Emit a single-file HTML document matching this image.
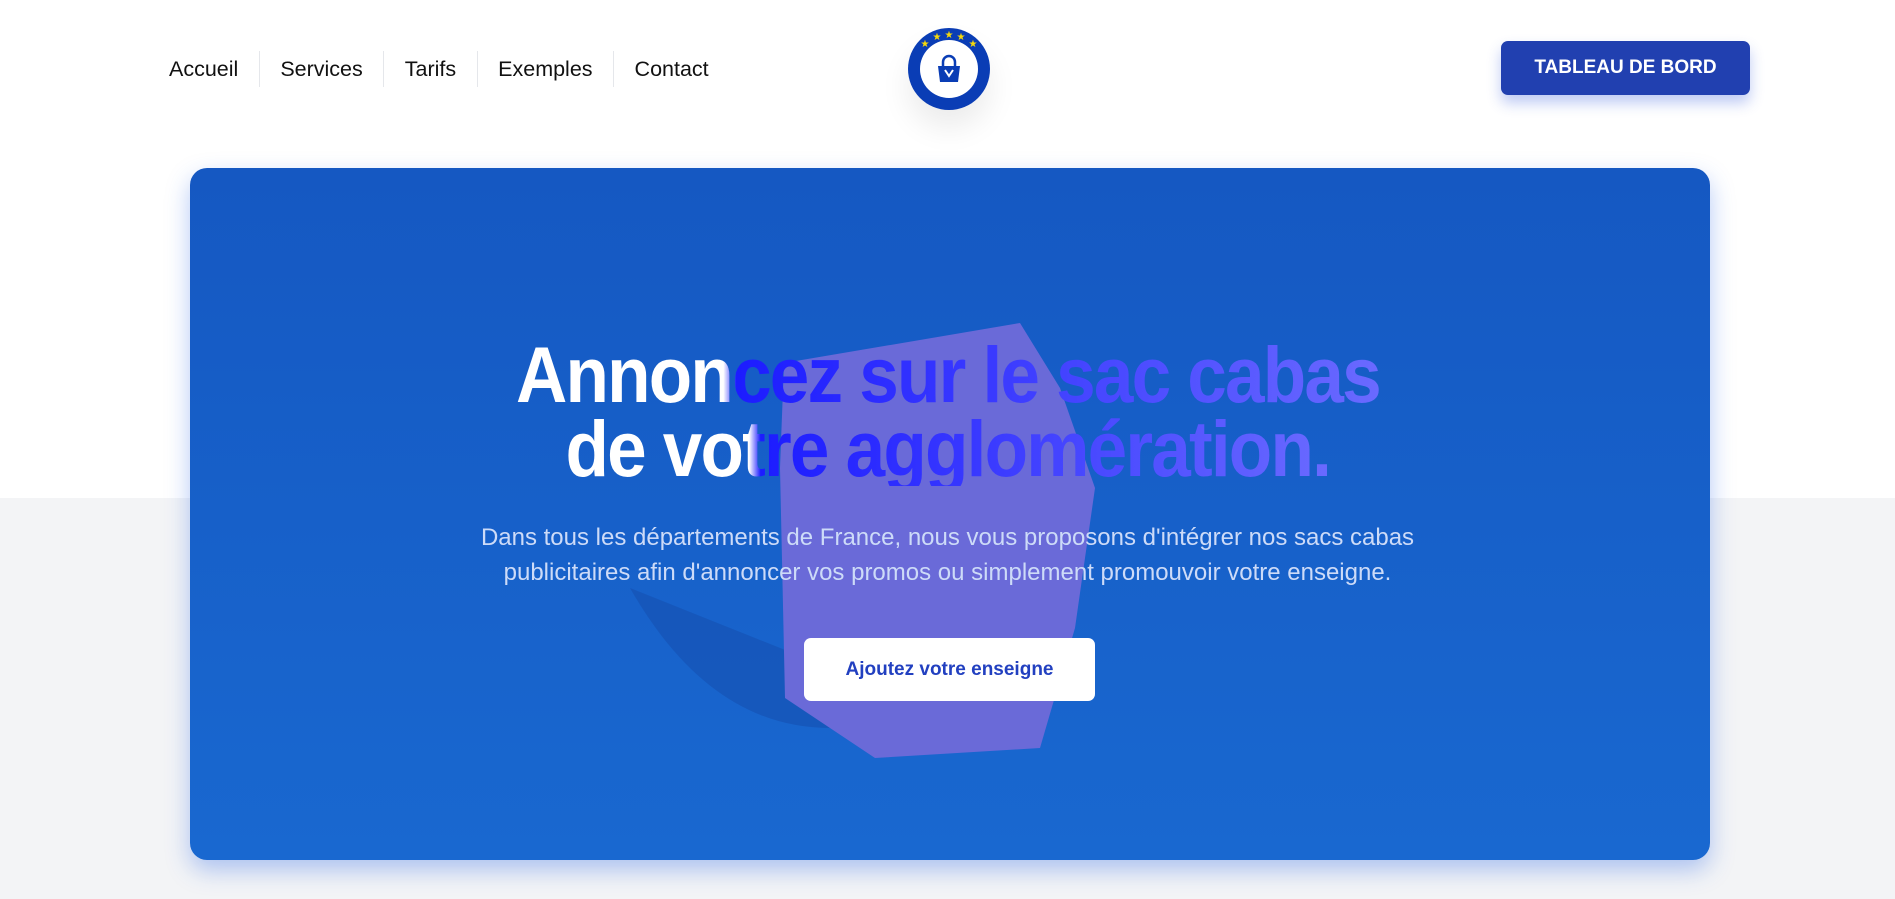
<!DOCTYPE html>
<html><head><meta charset="utf-8"><style>
*{margin:0;padding:0;box-sizing:border-box}
body{width:1895px;height:899px;overflow:hidden;background:#fff;font-family:"Liberation Sans",sans-serif;position:relative}
.grey{position:absolute;left:0;top:498px;width:1895px;height:401px;background:#f3f4f6}
nav{position:absolute;left:169px;top:51px;display:flex;font-size:21.5px;color:#111}
nav span{padding:0 20.5px;border-left:1px solid #e5e7eb;line-height:36px}
nav span:first-child{padding-left:0;border-left:none}
.logo{position:absolute;left:908px;top:28px;width:82px;height:82px;border-radius:50%;background:#0a3db5;box-shadow:0 18px 30px rgba(0,0,0,.08)}
.btn{position:absolute;left:1501px;top:41px;width:249px;height:54px;background:#2140b0;border-radius:7px;color:#fff;font-weight:bold;font-size:19px;text-align:center;line-height:54px;box-shadow:0 8px 14px rgba(40,80,220,.3)}
.card{position:absolute;left:190px;top:168px;width:1520px;height:692px;border-radius:17px;background:linear-gradient(180deg,#1558c2,#1968d0);box-shadow:0 10px 24px rgba(40,100,230,.35);overflow:hidden}
h1{position:absolute;left:0;width:1895px;top:338px;text-align:center;font-size:79px;line-height:74px;font-weight:bold;letter-spacing:-2px}
h1 span{display:inline-block;transform:scaleX(.9);background:linear-gradient(90deg,#fff 0%,#fff 24%,#1c1cff 25.5%,#3a3aff 55%,#6a6aff 100%);-webkit-background-clip:text;background-clip:text;color:transparent}
p{position:absolute;left:0;width:1895px;top:520px;text-align:center;font-size:24px;line-height:35px;color:#cddbf8}
.cta{position:absolute;left:804px;top:638px;width:291px;height:63px;background:#fff;border-radius:7px;color:#2240c0;font-size:19px;font-weight:bold;text-align:center;line-height:63px}
</style></head><body>
<div class="grey"></div>
<nav><span>Accueil</span><span>Services</span><span>Tarifs</span><span>Exemples</span><span>Contact</span></nav>
<div class="logo"><svg width="82" height="82" viewBox="0 0 82 82"><circle cx="41" cy="41" r="29" fill="#fff"/><g fill="#f5d90a" font-size="10" text-anchor="middle"><text x="17" y="19">★</text><text x="29" y="12">★</text><text x="41" y="10">★</text><text x="53" y="12">★</text><text x="65" y="19">★</text></g><path d="M30 38h22l-2 16H32z" fill="#0a3db5"/><path d="M35 38v-4a6 6 0 0 1 12 0v4" stroke="#0a3db5" stroke-width="2.5" fill="none"/><path d="M37 42l4 6 4-6" stroke="#fff" stroke-width="2" fill="none"/></svg></div>
<div class="btn">TABLEAU DE BORD</div>
<div class="card"><svg width="1520" height="692" viewBox="0 0 1520 692" style="position:absolute;left:0;top:0">
<path d="M440 420 Q520 560 640 560 L700 575 L640 500 Z" fill="#1550b0" opacity=".6"/>
<path d="M594 195 L830 155 L870 220 L905 320 L885 460 L850 580 L685 590 L595 530 L590 300 Z" fill="#6a6ad8"/>
</svg></div>
<h1><span>Annoncez sur le sac cabas</span><br><span>de votre agglomération.</span></h1>
<p>Dans tous les départements de France, nous vous proposons d'intégrer nos sacs cabas<br>publicitaires afin d'annoncer vos promos ou simplement promouvoir votre enseigne.</p>
<div class="cta">Ajoutez votre enseigne</div>
</body></html>
